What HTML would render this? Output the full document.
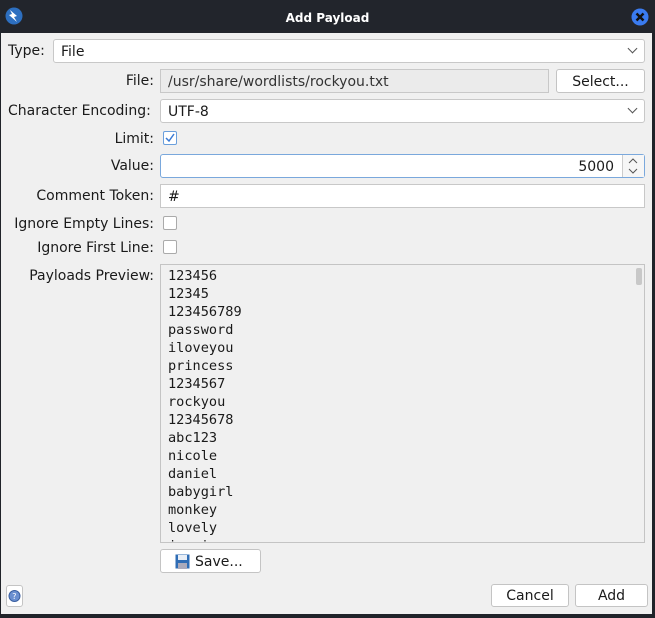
<!DOCTYPE html>
<html><head><style>
*{box-sizing:border-box;margin:0;padding:0}
body{width:655px;height:618px;background:#202329;font-family:"DejaVu Sans","Liberation Sans",sans-serif;font-size:14px;color:#1a1a1a;position:relative;overflow:hidden}
.title{position:absolute;left:0;top:0;width:655px;height:33px;background:#22252c;color:#fff;font-weight:bold;font-size:12px;text-align:center;line-height:36px}
.main{position:absolute;left:1px;top:33px;width:651px;height:581px;background:#f0f0f0}
.a{position:absolute}
.lbl{position:absolute;text-align:right;white-space:nowrap}
.box{position:absolute;background:#fff;border:1px solid #c8c8c8;border-radius:3px}
.chev{position:absolute;right:6px;top:5px;width:7px;height:7px;border-right:1px solid #555;border-bottom:1px solid #555;transform:rotate(45deg)}
.btn{position:absolute;background:#fff;border:1px solid #c4c4c4;border-radius:3px;text-align:center}
.cb{position:absolute;width:14px;height:14px;border:1px solid #aaa;border-radius:2px;background:#fff}
.mono{font-family:"DejaVu Sans Mono","Liberation Mono",monospace;font-size:13.6px;line-height:18px}
</style></head><body>
<div class="title">Add Payload</div>
<svg class="a" style="left:5px;top:7px" width="18" height="18"><circle cx="9" cy="9" r="8.5" fill="#2d6fc0"/><path d="M5 3 L12 9 L9 10 L12 15 L4 8 L7 7 Z" fill="#fff"/></svg>
<svg class="a" style="left:631px;top:8px" width="18" height="18"><circle cx="9" cy="9" r="8.5" fill="#3a7bf0"/><path d="M5.5 5.5L12.5 12.5M12.5 5.5L5.5 12.5" stroke="#111" stroke-width="2.5"/></svg>
<div class="main">
<div class="lbl" style="left:7px;top:10px">Type:</div>
<div class="box" style="left:52px;top:6px;width:592px;height:24px"><span class="a" style="left:7px;top:4px">File</span><div class="chev" style="right:8px"></div></div>
<div class="lbl" style="right:498px;top:40px">File:</div>
<div class="box" style="left:159px;top:36px;width:389px;height:24px;background:#ebebeb;border-radius:0"><span class="a" style="left:7px;top:4px;color:#333">/usr/share/wordlists/rockyou.txt</span></div>
<div class="btn" style="left:555px;top:36px;width:89px;height:24px;line-height:24px">Select...</div>
<div class="lbl" style="left:7px;top:70px">Character Encoding:</div>
<div class="box" style="left:159px;top:66px;width:485px;height:24px"><span class="a" style="left:7px;top:4px">UTF-8</span><div class="chev" style="right:8px"></div></div>
<div class="lbl" style="right:498px;top:98px">Limit:</div>
<div class="cb" style="left:162px;top:98px;border-color:#6a9fdc"><svg width="12" height="12" style="position:absolute;left:0;top:0"><path d="M2 6 L5 9 L10 2" stroke="#3a7bd5" stroke-width="1.5" fill="none"/></svg></div>
<div class="lbl" style="right:498px;top:125px">Value:</div>
<div class="box" style="left:159px;top:121px;width:485px;height:24px;border-color:#7aa8dc"><span class="a" style="right:30px;top:4px">5000</span><div class="a" style="right:0;top:0;width:22px;height:22px;border-left:1px solid #ccc;background:#f6f6f6"><svg width="20" height="22"><path d="M6 8 L10 4 L14 8 M6 14 L10 18 L14 14" stroke="#555" fill="none"/></svg></div></div>
<div class="lbl" style="right:498px;top:155px">Comment Token:</div>
<div class="box" style="left:159px;top:151px;width:485px;height:24px;border-radius:0"><span class="a" style="left:7px;top:4px">#</span></div>
<div class="lbl" style="right:498px;top:183px">Ignore Empty Lines:</div>
<div class="cb" style="left:162px;top:183px"></div>
<div class="lbl" style="right:498px;top:207px">Ignore First Line:</div>
<div class="cb" style="left:162px;top:207px"></div>
<div class="lbl" style="right:498px;top:235px">Payloads Preview:</div>
<div class="a" style="left:159px;top:231px;width:485px;height:279px;border:1px solid #c4c4c4;background:#f0f0f0;overflow:hidden">
<div class="a" style="right:2px;top:3px;width:6px;height:17px;background:#c8c8c8;border-radius:2px"></div>
<div class="mono a" style="left:7px;top:2px">123456<br>12345<br>123456789<br>password<br>iloveyou<br>princess<br>1234567<br>rockyou<br>12345678<br>abc123<br>nicole<br>daniel<br>babygirl<br>monkey<br>lovely<br>jessica</div>
</div>
<div class="btn" style="left:159px;top:516px;width:101px;height:24px;line-height:24px;text-align:left;padding-left:34px">Save...</div>
<svg class="a" style="left:174px;top:521px" width="15" height="15"><rect x="0.5" y="0.5" width="14" height="14" fill="#2f6db5"/><rect x="3" y="1" width="9" height="5" fill="#e8eef6"/><rect x="3" y="9" width="9" height="6" fill="#aab"/></svg>
<div class="btn" style="left:5px;top:552px;width:17px;height:22px"><svg width="15" height="20"><circle cx="7.5" cy="10" r="5.5" fill="#6a8fd0" stroke="#3a5fa0"/><text x="5.3" y="13" font-size="8" fill="#fff" font-family="DejaVu Sans">?</text></svg></div>
<div class="btn" style="left:490px;top:551px;width:78px;height:23px;line-height:23px">Cancel</div>
<div class="btn" style="left:574px;top:551px;width:73px;height:23px;line-height:23px">Add</div>
</div>
</body></html>
